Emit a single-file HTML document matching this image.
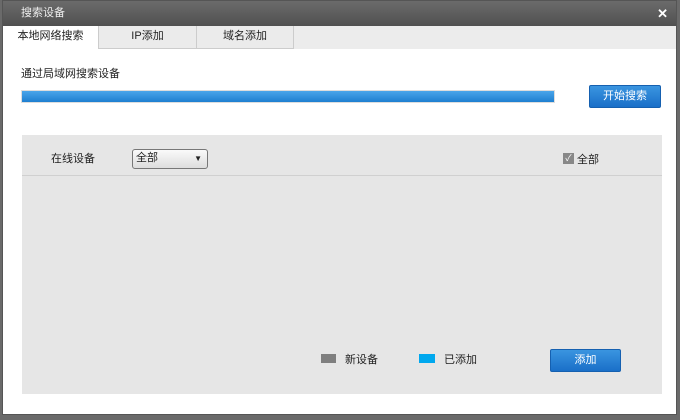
<!DOCTYPE html><html><head><meta charset="utf-8"><style>
*{margin:0;padding:0;box-sizing:border-box}
body{width:680px;height:420px;overflow:hidden;background:#6a6a6a;font-family:"Liberation Sans","Noto Sans CJK SC",sans-serif;font-size:11px;color:#222;position:relative}
.win{position:absolute;left:2px;top:0;width:675px;height:415px;background:#fff;border:1px solid #555}
.title{position:absolute;left:0;top:0;width:100%;height:25px;background:linear-gradient(#6b6b6b,#505050);color:#eee;font-size:11px;line-height:25px;padding-left:18px}
.x{position:absolute;right:8px;top:0;color:#fff;font-weight:bold;font-size:13px}
.tabs{position:absolute;left:0;top:25px;width:100%;height:23px;background:#ececec}
.tab{position:absolute;top:0;height:23px;line-height:21px;text-align:center;border-right:1px solid #ccc;border-bottom:1px solid #ccc;background:#ebebeb}
.a{position:absolute}
.btn{position:absolute;height:23px;background:linear-gradient(#3a95e0,#1a6fc8);border:1px solid #1560b0;color:#fff;text-align:center;line-height:20px;border-radius:2px}
</style></head><body>
<div class="win">
<div class="title">搜索设备<span class="x">✕</span></div>
<div class="tabs">
<div class="tab" style="left:0;width:96px;background:#fff;border-bottom:none">本地网络搜索</div>
<div class="tab" style="left:96px;width:98px">IP添加</div>
<div class="tab" style="left:194px;width:97px">域名添加</div>
</div>
<div class="a" style="left:18px;top:64px">通过局域网搜索设备</div>
<div class="a" style="left:18px;top:89px;width:534px;height:13px;border:1px solid #ddd;background:linear-gradient(#4aa5ea,#1e7fd0)"></div>
<div class="btn" style="left:586px;top:84px;width:72px">开始搜索</div>
<div class="a" style="left:19px;top:134px;width:640px;height:259px;background:#e6e6e6">
<div class="a" style="left:0;top:40px;width:100%;height:1px;background:#d0d0d0"></div>
<div class="a" style="left:29px;top:15px">在线设备</div>
<div class="a" style="left:110px;top:14px;width:76px;height:20px;border:1px solid #777;border-radius:3px;background:linear-gradient(#fafafa,#ddd);padding-left:3px;line-height:17px">全部<span style="position:absolute;right:5px;top:0;font-size:8px">▼</span></div>
<div class="a" style="left:541px;top:18px;width:11px;height:11px;background:#888;color:#fff;font-size:9px;line-height:11px;text-align:center">✓</div>
<div class="a" style="left:555px;top:16px">全部</div>
<div class="a" style="left:299px;top:219px;width:15px;height:9px;background:#7f7f7f"></div>
<div class="a" style="left:323px;top:216px">新设备</div>
<div class="a" style="left:397px;top:219px;width:16px;height:9px;background:#00a8ee"></div>
<div class="a" style="left:422px;top:216px">已添加</div>
<div class="btn" style="left:528px;top:214px;width:71px">添加</div>
</div>
</div>
</body></html>
